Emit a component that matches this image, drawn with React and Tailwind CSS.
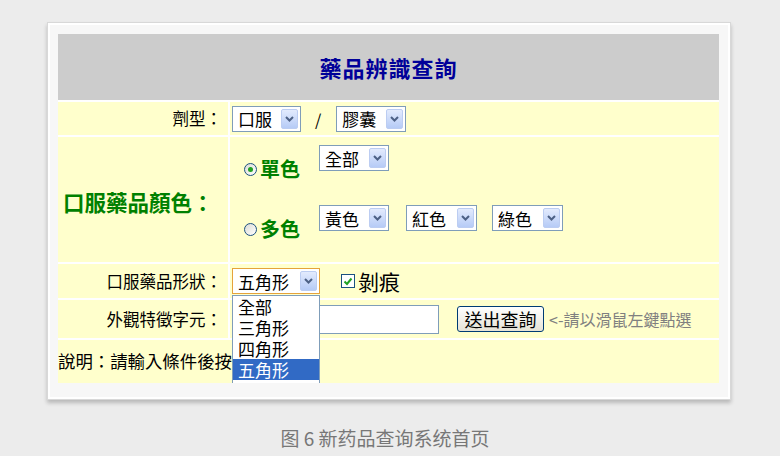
import React from "react";

const font = { fontFamily: '"Noto Sans CJK TC", "Noto Sans CJK SC", sans-serif' };

function Chevron() {
    return (
        <svg width="9" height="6" viewBox="0 0 9 6">
            <path d="M1 1 L4.5 4.5 L8 1" fill="none" stroke="#4d6185" strokeWidth="2" />
        </svg>
    );
}

function Sel({ label, w, focus }) {
    return (
        <div className={`${w} h-[26px] border ${focus ? "border-[#e5a33b]" : "border-[#7f9db9]"} bg-white flex items-center justify-between pl-[5px] pr-[2px] shrink-0`}>
            <span className="text-[17px] leading-none text-black">{label}</span>
            <span className="w-[17px] h-[20px] rounded-[2px] bg-gradient-to-b from-[#e3ebfd] to-[#b6cbf6] border border-[#bccdf2] flex items-center justify-center">
                <Chevron />
            </span>
        </div>
    );
}

function Radio({ checked }) {
    return (
        <span className="w-[13px] h-[13px] rounded-full border border-[#1c5180] bg-gradient-to-br from-[#dcdcd5] to-white flex items-center justify-center shrink-0">
            {checked && <span className="w-[5px] h-[5px] rounded-full bg-[#21a121]" />}
        </span>
    );
}

export default function App() {
    return (
        <div className="w-[780px] h-[456px] bg-[#ececec] pt-[22px] pl-[47px] overflow-hidden" style={font}>
            {/* card */}
            <div className="w-[684px] h-[378px] border border-[#d8d8d8] bg-[#f7f7f7] pt-[11px] pl-[10px] shadow-[0_3px_4px_rgba(0,0,0,0.22)] ring-2 ring-inset ring-white">
                <div className="w-[661px] flex flex-col gap-[2px] bg-white relative">
                    <div className="h-[66px] bg-[#cccccc] flex items-center justify-center">
                        <h1 className="text-[22px] font-bold text-[#000099] tracking-[1px]">藥品辨識查詢</h1>
                    </div>

                    {/* 劑型 */}
                    <div className="h-[33px] flex gap-[2px]">
                        <div className="w-[170px] bg-[#ffffcc] flex items-center justify-end pr-[6px] text-[16.5px] text-black">劑型：</div>
                        <div className="flex-1 bg-[#ffffcc] flex items-center pl-[2px]">
                            <Sel label="口服" w="w-[69px]" />
                            <span className="ml-[14px] mr-[15px] text-[16px] text-black">/</span>
                            <Sel label="膠囊" w="w-[70px]" />
                        </div>
                    </div>

                    {/* 顏色 */}
                    <div className="h-[125px] flex gap-[2px]">
                        <div className="w-[170px] bg-[#ffffcc] flex items-center pl-[5px] pt-[6px] text-[21.5px] font-bold text-[#008000]">口服藥品顏色：</div>
                        <div className="flex-1 bg-[#ffffcc] pt-[8px] pl-[14px] flex flex-col gap-[25px]">
                            <div className="flex items-start">
                                <div className="w-[75px] pt-[13px] flex items-center gap-[3px] text-[20px] font-bold text-[#008000] leading-[22px]">
                                    <Radio checked />
                                    <span>單色</span>
                                </div>
                                <Sel label="全部" w="w-[70px]" />
                            </div>
                            <div className="flex items-start">
                                <div className="w-[75px] pt-[13px] flex items-center gap-[3px] text-[20px] font-bold text-[#008000] leading-[22px]">
                                    <Radio />
                                    <span>多色</span>
                                </div>
                                <Sel label="黃色" w="w-[70px]" />
                                <div className="ml-[17px]"><Sel label="紅色" w="w-[71px]" /></div>
                                <div className="ml-[15px]"><Sel label="綠色" w="w-[71px]" /></div>
                            </div>
                        </div>
                    </div>

                    {/* 形狀 */}
                    <div className="h-[34px] flex gap-[2px]">
                        <div className="w-[170px] bg-[#ffffcc] flex items-center justify-end pr-[6px] text-[16.5px] text-black">口服藥品形狀：</div>
                        <div className="flex-1 bg-[#ffffcc] flex items-center pl-[2px] relative">
                            <Sel label="五角形" w="w-[88px]" focus />
                            <span className="ml-[21px] w-[14px] h-[14px] border border-[#1c5180] bg-white flex items-center justify-center">
                                <svg width="10" height="9" viewBox="0 0 10 9">
                                    <path d="M1.5 4.5 L4 7 L8.5 1.5" fill="none" stroke="#21a121" strokeWidth="2" />
                                </svg>
                            </span>
                            <span className="ml-[3px] text-[21px] text-black leading-none">剝痕</span>

                            {/* open dropdown list */}
                            <div className="absolute left-[2px] top-[31px] w-[88px] h-[88px] overflow-hidden border-x border-t border-[#7f9db9] bg-white z-10 text-[17px] leading-[21px] text-black">
                                <div className="pl-[5px]">全部</div>
                                <div className="pl-[5px]">三角形</div>
                                <div className="pl-[5px]">四角形</div>
                                <div className="pl-[5px] bg-[#316ac5] text-white">五角形</div>
                            </div>
                        </div>
                    </div>

                    {/* 外觀 */}
                    <div className="h-[38px] flex gap-[2px]">
                        <div className="w-[170px] bg-[#ffffcc] flex items-center justify-end pr-[6px] text-[16.5px] text-black">外觀特徵字元：</div>
                        <div className="flex-1 bg-[#ffffcc] flex items-center pl-[2px]">
                            <input className="w-[207px] h-[29px] border border-[#7f9db9] bg-white outline-none" />
                            <button className="ml-[18px] w-[87px] h-[26px] rounded-[3px] border border-[#003c74] bg-gradient-to-b from-white to-[#e6e3d6] text-[18px] text-black leading-none">送出查詢</button>
                            <span className="ml-[5px] text-[16px] text-[#808080]">&lt;-請以滑鼠左鍵點選</span>
                        </div>
                    </div>

                    {/* 說明 */}
                    <div className="h-[43px] bg-[#ffffcc] flex items-center text-[17.4px] text-black">
                        <span>說明：請輸入條件後按</span>
                        <span className="text-[#ff0000]">「查詢」</span>
                    </div>
                </div>
            </div>

            <p className="-ml-[47px] w-[780px] pr-[10px] mt-[24px] text-center text-[19px] text-[#777777]" style={{ fontFamily: '"Noto Sans CJK SC", sans-serif' }}>
                图 6 新药品查询系统首页
            </p>
        </div>
    );
}
